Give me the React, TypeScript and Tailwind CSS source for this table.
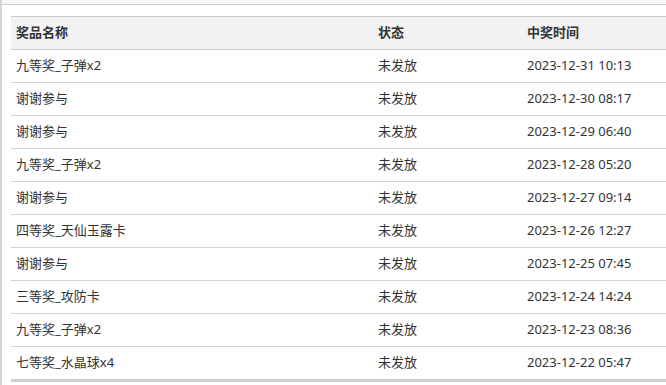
const rows = [
  ['九等奖_子弹x2', '未发放', '2023-12-31 10:13'],
  ['谢谢参与', '未发放', '2023-12-30 08:17'],
  ['谢谢参与', '未发放', '2023-12-29 06:40'],
  ['九等奖_子弹x2', '未发放', '2023-12-28 05:20'],
  ['谢谢参与', '未发放', '2023-12-27 09:14'],
  ['四等奖_天仙玉露卡', '未发放', '2023-12-26 12:27'],
  ['谢谢参与', '未发放', '2023-12-25 07:45'],
  ['三等奖_攻防卡', '未发放', '2023-12-24 14:24'],
  ['九等奖_子弹x2', '未发放', '2023-12-23 08:36'],
  ['七等奖_水晶球x4', '未发放', '2023-12-22 05:47'],
];

export default function App() {
  return (
    <div
      className="h-[385px] w-[666px] overflow-hidden bg-white border-l-2 border-[#d4d4d4] text-[13px] text-[#333]"
      style={{ fontFamily: '"Microsoft YaHei", "Noto Sans", "Noto Sans CJK SC", sans-serif' }}
    >
      {/* top strip */}
      <div className="h-[5px] bg-[#f6f6f6] border-b border-[#cfcfcf]" />

      <div className="pl-[9px] pt-[11px]">
        {/* header */}
        <div className="grid grid-cols-[362px_149px_1fr] h-[34px] bg-[#f2f2f2] border-y border-[#cccccc] font-bold items-center">
          <div className="px-[5px]">奖品名称</div>
          <div className="px-[5px]">状态</div>
          <div className="px-[5px]">中奖时间</div>
        </div>

        {/* rows */}
        {rows.map((r, i) => (
          <div
            key={i}
            className={
              i === rows.length - 1
                ? 'grid grid-cols-[362px_149px_1fr] h-[35px] border-b-[3px] border-[#cccccc] items-center'
                : 'grid grid-cols-[362px_149px_1fr] h-[33px] border-b border-[#d2d2d2] items-center'
            }
          >
            <div className="px-[5px]">{r[0]}</div>
            <div className="px-[5px]">{r[1]}</div>
            <div className="px-[5px]">{r[2]}</div>
          </div>
        ))}
      </div>
    </div>
  );
}
